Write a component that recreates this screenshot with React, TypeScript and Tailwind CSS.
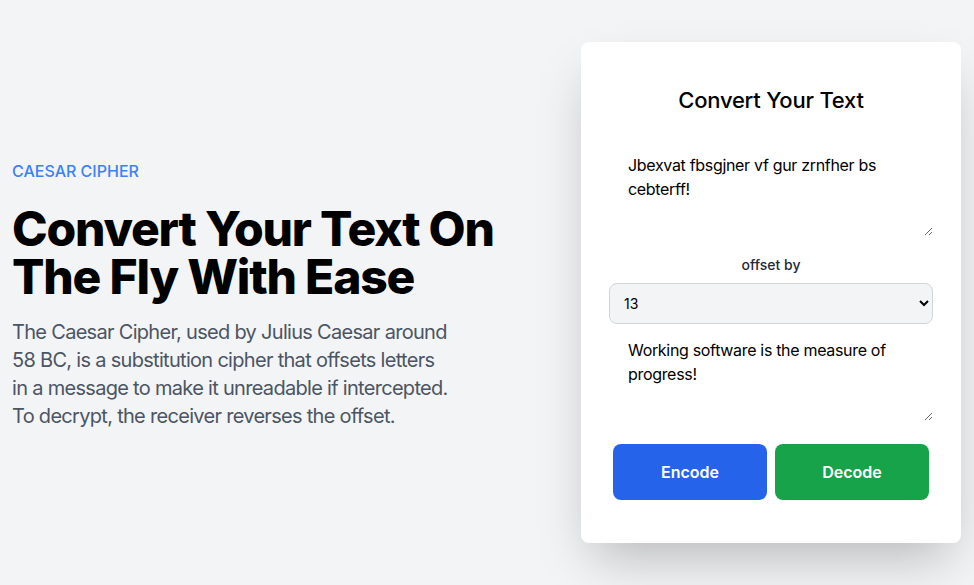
import React, { useState } from "react";

export default function App() {
  const [input, setInput] = useState("Jbexvat fbsgjner vf gur zrnfher bs cebterff!");
  const [offset, setOffset] = useState("13");
  const [output, setOutput] = useState("Working software is the measure of progress!");
  const font = { fontFamily: "Inter, 'Noto Sans', sans-serif" };
  return (
    <div className="min-h-screen h-[585px] w-full bg-[#f3f4f6] flex items-center justify-between pl-3 pr-[13px]" style={font}>
      <div className="flex flex-col pt-1">
        <div className="text-base text-[#3b82f6] uppercase leading-6 font-medium">Caesar Cipher</div>
        <h1 className="mt-[22px] text-5xl leading-[48px] font-extrabold text-black tracking-tight">
          Convert Your Text On
          <br />
          The Fly With Ease
        </h1>
        <p className="mt-[17px] whitespace-nowrap text-xl leading-7 text-[#4b5563] tracking-[-0.035em]">
          The Caesar Cipher, used by Julius Caesar around
          <br />
          58 BC, is a substitution cipher that offsets letters
          <br />
          in a message to make it unreadable if intercepted.
          <br />
          To decrypt, the receiver reverses the offset.
        </p>
      </div>
      <div className="w-[380px] h-[501px] bg-white rounded-lg shadow-2xl px-7 pt-[42px] flex flex-col">
        <h2 className="text-center text-[22px] leading-8 font-medium text-black tracking-[-0.01em]">Convert Your Text</h2>
        <textarea
          className="mt-[23px] h-[97px] w-full px-[19px] pt-[14px] text-base leading-6 text-black outline-none resize-y tracking-[-0.02em]"
          value={input}
          onChange={(e) => setInput(e.target.value)}
        />
        <label className="mt-[19px] text-center text-sm leading-5 font-medium text-[#1f2937]">offset by</label>
        <select
          className="mt-2 h-[41px] w-full rounded-lg border border-[#d1d5db] bg-[#f3f4f6] px-2.5 text-sm text-black"
          value={offset}
          onChange={(e) => setOffset(e.target.value)}
        >
          {Array.from({ length: 26 }, (_, i) => (
            <option key={i} value={String(i)}>{i}</option>
          ))}
        </select>
        <textarea
          className="h-[97px] w-full px-[19px] pt-[14px] text-base leading-6 text-black outline-none resize-y tracking-[-0.02em]"
          value={output}
          onChange={(e) => setOutput(e.target.value)}
        />
        <div className="mt-[23px] px-1 grid grid-cols-2 gap-2">
          <button className="h-14 rounded-lg bg-[#2563eb] text-white font-semibold text-base">Encode</button>
          <button className="h-14 rounded-lg bg-[#16a34a] text-white font-semibold text-base">Decode</button>
        </div>
      </div>
    </div>
  );
}
